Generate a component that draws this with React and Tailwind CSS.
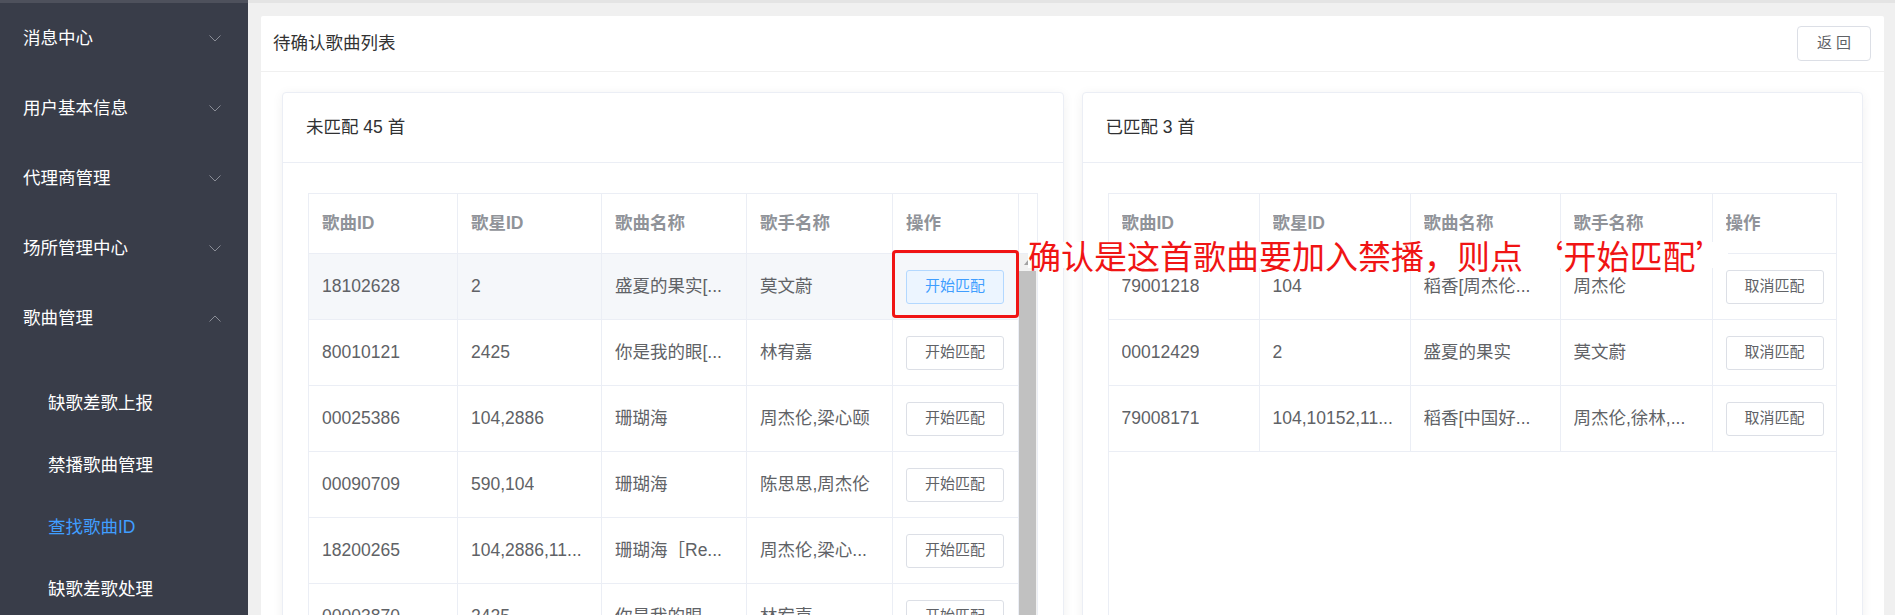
import React from "react";

const FONT = { fontFamily: '"Liberation Sans", "Noto Sans CJK SC", sans-serif' };

const menus = [
  { label: "消息中心" },
  { label: "用户基本信息" },
  { label: "代理商管理" },
  { label: "场所管理中心" },
  { label: "歌曲管理", open: true },
];

const subMenus = [
  { label: "缺歌差歌上报" },
  { label: "禁播歌曲管理" },
  { label: "查找歌曲ID", active: true },
  { label: "缺歌差歌处理" },
];

const unmatched = [
  ["18102628", "2", "盛夏的果实[...", "莫文蔚"],
  ["80010121", "2425", "你是我的眼[...", "林宥嘉"],
  ["00025386", "104,2886", "珊瑚海", "周杰伦,梁心颐"],
  ["00090709", "590,104", "珊瑚海", "陈思思,周杰伦"],
  ["18200265", "104,2886,11...", "珊瑚海［Re...", "周杰伦,梁心..."],
  ["00003870", "2425", "你是我的眼...", "林宥嘉"],
  ["00012430", "2", "盛夏的果实", "莫文蔚"],
];

const matched = [
  ["79001218", "104", "稻香[周杰伦...", "周杰伦"],
  ["00012429", "2", "盛夏的果实", "莫文蔚"],
  ["79008171", "104,10152,11...", "稻香[中国好...", "周杰伦,徐林,..."],
];

const headers = ["歌曲ID", "歌星ID", "歌曲名称", "歌手名称", "操作"];

const Chevron = ({ up }) => (
  <svg width="12" height="7" viewBox="0 0 12 7" className="text-[#8a8d96]">
    <polyline
      points={up ? "0.5,6.5 6,1 11.5,6.5" : "0.5,0.5 6,6 11.5,0.5"}
      fill="none"
      stroke="currentColor"
      strokeWidth="1"
    />
  </svg>
);

const Sidebar = () => (
  <aside className="w-[248px] shrink-0 bg-[#393d49] border-t-[3px] border-[#4e515c]">
    {menus.map((m) => (
      <div key={m.label} className="h-[70px] flex items-center justify-between pl-[23px] pr-[27px] text-white text-[17.5px]">
        <span>{m.label}</span>
        <Chevron up={m.open} />
      </div>
    ))}
    <div className="pt-[19px]">
      {subMenus.map((s) => (
        <div
          key={s.label}
          className={`h-[62px] flex items-center pl-[48px] text-[17.5px] ${s.active ? "text-[#409eff]" : "text-white"}`}
        >
          {s.label}
        </div>
      ))}
    </div>
  </aside>
);

const ActionButton = ({ children, active }) => (
  <button
    className={`h-[34px] w-[98px] rounded-[3px] border text-[15px] ${
      active ? "border-[#b3d8ff] bg-[#ecf5ff] text-[#409eff]" : "border-[#dcdfe6] bg-white text-[#606266]"
    }`}
  >
    {children}
  </button>
);

const Cell = ({ w, children, last }) => (
  <div className={`${w} h-full flex items-center pl-[13px] pr-[10px] overflow-hidden ${last ? "" : "border-r border-[#ebeef5]"}`}>
    <span className="truncate">{children}</span>
  </div>
);

const SongTable = ({ rows, widths, action, gutter, bodyHeight }) => (
  <div className="border border-[#ebeef5]">
    <div className="h-[60px] flex border-b border-[#ebeef5] font-bold text-[#909399] text-[17.5px]">
      {headers.map((h, i) => (
        <Cell key={h} w={widths[i]} last={i === 4 && !gutter}>
          {h}
        </Cell>
      ))}
      {gutter && <div className="flex-1" />}
    </div>
    <div className="flex overflow-hidden" style={{ height: bodyHeight }}>
      <div className="flex-1">
        {rows.map((r, idx) => (
          <div
            key={r[0]}
            className={`h-[66px] flex border-b border-[#ebeef5] text-[17.5px] text-[#606266] ${idx === 0 && gutter ? "bg-[#f5f7fa]" : ""}`}
          >
            <Cell w={widths[0]}>{r[0]}</Cell>
            <Cell w={widths[1]}>{r[1]}</Cell>
            <Cell w={widths[2]}>{r[2]}</Cell>
            <Cell w={widths[3]}>{r[3]}</Cell>
            <div className={`${widths[4]} h-full flex items-center pl-[13px] ${gutter ? "border-r border-[#ebeef5]" : ""}`}>
              <ActionButton active={idx === 0 && gutter}>{action}</ActionButton>
            </div>
          </div>
        ))}
      </div>
      {gutter && (
        <div className="w-[18px] bg-[#f1f1f1] flex flex-col items-center">
          <div className="h-[17px] flex items-center justify-center">
            <div className="w-0 h-0 border-l-[4px] border-r-[4px] border-b-[5px] border-l-transparent border-r-transparent border-b-[#a3a3a3]" />
          </div>
          <div className="w-[17px] flex-1 bg-[#c1c1c1]" />
        </div>
      )}
    </div>
  </div>
);

const Panel = ({ title, children }) => (
  <div className="flex-1 border border-[#ebeef5] rounded-[4px] bg-white shadow-[0_2px_12px_0_rgba(0,0,0,0.06)] overflow-hidden">
    <div className="h-[70px] flex items-center pl-[23px] border-b border-[#ebeef5] text-[17.5px] text-[#303133]">
      {title}
    </div>
    <div className="px-[25px] pt-[30px]">{children}</div>
  </div>
);

export default function App() {
  return (
    <div className="relative w-[1895px] h-[615px] overflow-hidden flex bg-[#f0f0f0]" style={FONT}>
      <Sidebar />
      <main className="flex-1 min-w-0 border-t-[3px] border-[#e4e4e4] pl-[13px] pr-[11px] pt-[13px]">
        <div className="bg-white rounded-[2px] h-[700px]">
          <div className="h-[56px] flex items-center justify-between pl-[12px] pr-[13px] border-b border-[#f0f0f0]">
            <span className="text-[17.5px] text-[#333]">待确认歌曲列表</span>
            <button className="h-[35px] w-[74px] rounded-[4px] border border-[#dcdfe6] text-[15px] text-[#606266]">
              返 回
            </button>
          </div>
          <div className="flex gap-[18px] px-[21px] pt-[20px]">
            <Panel title="未匹配 45 首">
              <SongTable
                rows={unmatched}
                widths={["w-[149px]", "w-[144px]", "w-[145px]", "w-[146px]", "w-[126px]"]}
                action="开始匹配"
                gutter
                bodyHeight={420}
              />
            </Panel>
            <Panel title="已匹配 3 首">
              <SongTable
                rows={matched}
                widths={["w-[151px]", "w-[151px]", "w-[150px]", "w-[152px]", "flex-1"]}
                action="取消匹配"
                bodyHeight={420}
              />
            </Panel>
          </div>
        </div>
      </main>

      {/* annotation overlay */}
      <div className="absolute left-[892px] top-[250px] w-[127px] h-[68px] border-[3px] border-[#f01414] rounded-[4px]" />
      <div
        className="absolute left-[1028px] top-[242px] h-[26px] flex items-center bg-white text-[33px] leading-[26px] text-[#f01414] whitespace-nowrap"
        style={{ fontFamily: '"Noto Sans CJK SC", sans-serif' }}
      >
        确认是这首歌曲要加入禁播，则点 ‘开始匹配’
      </div>
    </div>
  );
}
